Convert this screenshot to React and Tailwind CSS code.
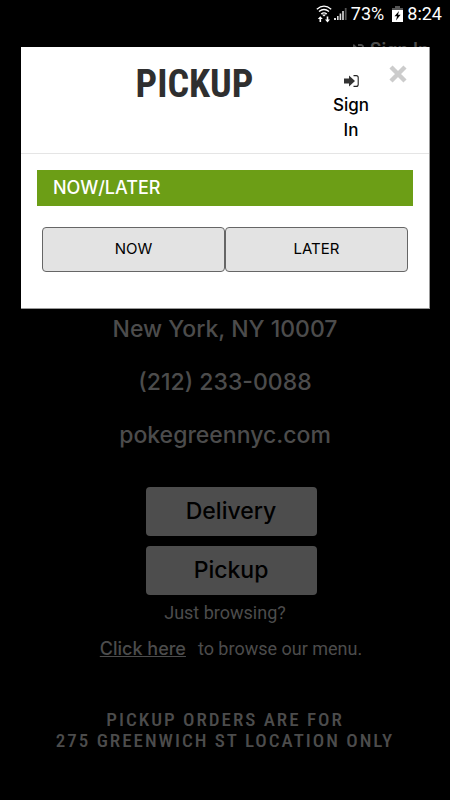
import { FaSignInAlt } from 'react-icons/fa'

function WifiIcon() {
  return (
    <svg viewBox="0 0 16 18" className="w-4 h-[18px]" fill="none" stroke="#fff" aria-hidden="true">
      <path d="M.8 4.2Q8-2 15.2 4.2M3 6.6q5-4.2 10 0M5.2 9q2.8-2.4 5.6 0" strokeWidth="1.3" />
      <path d="M8 11.6L5.8 9.4h4.4z" fill="#fff" stroke="none" />
      <path d="M4.3 11.2L1.8 14h1.7v3h1.6v-3h1.7zM11.5 17.4L9 14.6h1.7v-3h1.6v3H14z" fill="#fff" stroke="none" />
    </svg>
  )
}

function SignalIcon() {
  return (
    <svg viewBox="0 0 13 14" className="w-[13px] h-3.5" aria-hidden="true">
      <path d="M0 11h2v2H0zM3 9h1.6v4H3zM5.6 6.5h1.6V13H5.6zM8.2 4h1.6v9H8.2z" fill="#ddd" />
      <path d="M10.8 1h1.8v12h-1.8z" fill="#555" />
    </svg>
  )
}

function BatteryIcon() {
  return (
    <svg viewBox="0 0 11 16" className="w-[11px] h-4" aria-hidden="true">
      <path d="M3 0h5v2h3v3H0V2h3z" fill="#555" />
      <path d="M0 4h11v12H0z" fill="#fff" />
      <path d="M7 5L2.5 10.3h2.6L4 14.5l4.6-5.7H6z" fill="#000" />
    </svg>
  )
}

function SignInIcon() {
  return (
    <svg viewBox="0 0 15 12" className="w-[15px] h-3" aria-hidden="true">
      <path d="M0 3.4h5V.4L11 6 5 11.6v-3H0z" fill="#333" />
      <path d="M9.5.6h2.7q2 0 2 2v6.8q0 2-2 2H9.5" fill="none" stroke="#222" strokeWidth="1.1" />
    </svg>
  )
}

function StatusBar() {
  return (
    <header className="h-7 px-2 flex items-center justify-end font-[Roboto,sans-serif] text-lg text-white">
      <span className="mr-0.5"><WifiIcon /></span>
      <SignalIcon />
      <span className="ml-1">73%</span>
      <span className="ml-2"><BatteryIcon /></span>
      <span className="ml-1">8:24</span>
    </header>
  )
}

function PickupDialog() {
  return (
    <div
      role="dialog"
      aria-labelledby="dialog-title"
      className="absolute left-[21px] right-5 top-[47px] bg-white border-r border-b border-[#999] text-black"
    >
      <div className="h-[107px] flex border-b border-[#e5e5e5]">
        <h1
          id="dialog-title"
          className="flex-1 pl-9 pt-3 text-center font-['Roboto_Condensed','Liberation_Sans_Narrow',sans-serif] font-bold text-[38px] leading-[50px] text-[#2f2f2f]"
        >
          PICKUP
        </h1>
        <a href="#signin" className="w-[38px] pt-[21px] flex flex-col items-center text-center text-[17px] leading-[25px] font-medium">
          <span className="h-[25px] flex items-center">
            <SignInIcon />
          </span>
          Sign In
        </a>
        <div className="w-[59px] pr-1 pt-[18px] flex justify-center items-start">
          <button type="button" aria-label="Close">
            <svg viewBox="0 0 18 18" className="w-[18px] h-[18px]" aria-hidden="true">
              <path d="M2 2l14 14M16 2L2 16" stroke="#ccc" strokeWidth="4.4" />
            </svg>
          </button>
        </div>
      </div>
      <div className="px-4 pt-4 pb-9">
        <h2 className="h-9 px-4 flex items-center bg-[#6c9e16] text-white text-lg font-medium">NOW/LATER</h2>
        <div className="mt-[21px] px-[5px] grid grid-cols-2">
          <button type="button" className="h-[45px] rounded border border-[#666] bg-[#e3e3e3] text-[15px]">NOW</button>
          <button type="button" className="h-[45px] rounded border border-[#666] bg-[#e3e3e3] text-[15px]">LATER</button>
        </div>
      </div>
    </div>
  )
}

export default function App() {
  return (
    <div className="relative min-h-screen bg-black font-[Inter,sans-serif] text-[#4c4c4c]">
      <StatusBar />
      <a href="#signin" className="mt-2 pr-[21px] flex items-center justify-end gap-1.5 text-lg leading-7 font-semibold">
        <FaSignInAlt className="w-4 h-4" />
        Sign In
      </a>
      <main className="pt-[249px] flex flex-col items-center">
        <address className="not-italic flex flex-col items-center gap-[21px] text-[23px] leading-8 font-medium">
          <span>New York, NY 10007</span>
          <a href="tel:2122330088">(212) 233-0088</a>
          <a href="#site">pokegreennyc.com</a>
        </address>
        <div className="mt-9 ml-3 w-[171px] flex flex-col gap-2.5">
          <button type="button" className="h-[49px] rounded bg-[#4d4d4d] text-black text-[23px] font-medium">Delivery</button>
          <button type="button" className="h-[49px] rounded bg-[#4d4d4d] text-black text-[23px] font-medium">Pickup</button>
        </div>
        <p className="mt-1 font-[Roboto,sans-serif] text-lg leading-7">Just browsing?</p>
        <p className="mt-2 ml-3 flex items-center font-[Roboto,sans-serif] text-lg leading-7">
          <a href="#menu" className="mr-3 font-[Inter,sans-serif] font-medium underline">Click here</a>
          to browse our menu.
        </p>
        <p className="mt-[46px] text-center font-['Roboto_Condensed','Liberation_Sans_Narrow',sans-serif] font-medium text-[19px] leading-[21px] tracking-[2px]">
          PICKUP ORDERS ARE FOR
          <br />
          275 GREENWICH ST LOCATION ONLY
        </p>
      </main>
      <PickupDialog />
    </div>
  )
}
